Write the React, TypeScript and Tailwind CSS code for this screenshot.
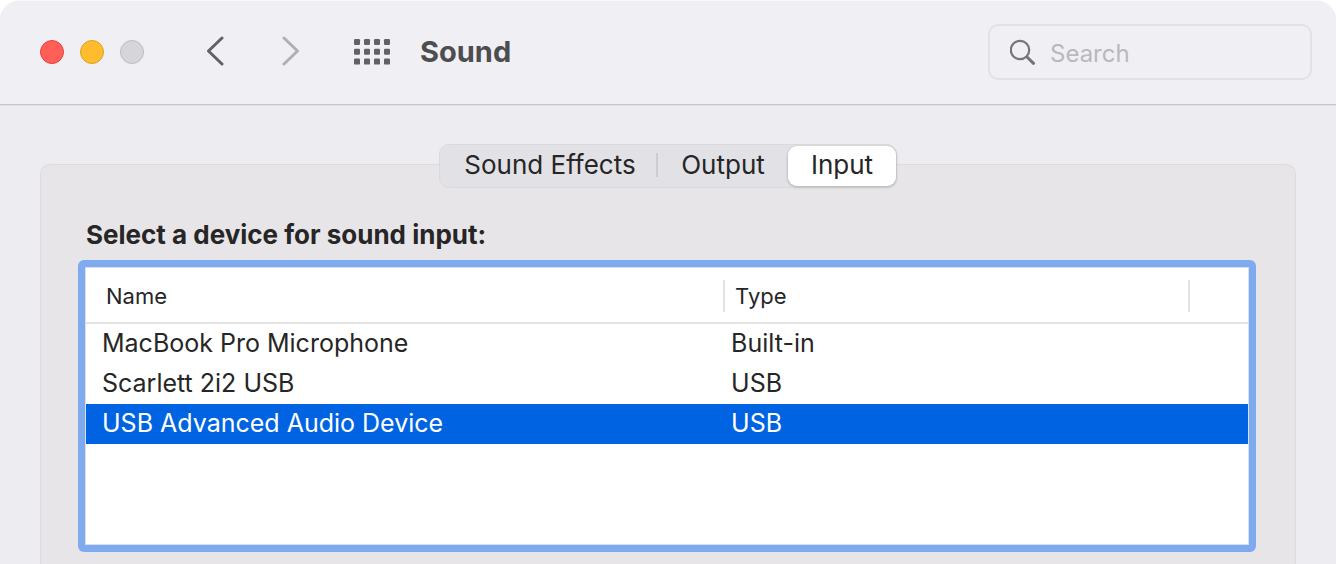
import { useState } from "react";

const TABS = [
  { id: "effects", label: "Sound Effects", width: "w-[218px]" },
  { id: "output",  label: "Output",        width: "w-[130px]" },
  { id: "input",   label: "Input",         width: "w-[108px]" },
] as const;

const DEVICES = [
  { name: "MacBook Pro Microphone", type: "Built-in" },
  { name: "Scarlett 2i2 USB", type: "USB" },
  { name: "USB Advanced Audio Device", type: "USB" },
];

type TabId = (typeof TABS)[number]["id"];

function Chevron({ flipped = false }: { flipped?: boolean }) {
  return (
    <svg width="20" height="32" viewBox="0 0 20 32" fill="none" stroke="currentColor" strokeWidth="3" strokeLinecap="round" strokeLinejoin="round">
      <path d={flipped ? "M3 2 L16.5 15 L3 28" : "M17 2 L3.5 15 L17 28"} />
    </svg>
  );
}

function GridIcon() {
  return (
    <svg width="36" height="26" viewBox="0 0 36 26" fill="currentColor">
      {[0, 10, 20, 30].map((x) =>
        [0, 9.8, 19.6].map((y) => <rect key={`${x}-${y}`} x={x} y={y} width="6" height="6" rx="1.2" />)
      )}
    </svg>
  );
}

function Toolbar() {
  return (
    <header className="flex h-[104px] items-center border-b border-[#c6c5ca] bg-[#f0eff4] pr-6 pb-[2px] pl-10 shadow-[0_1px_0_#e3e2e7]">
      <div className="flex gap-4">
        <button aria-label="Close" className="size-6 rounded-full border border-[#e2463f] bg-[#ff5f57]" />
        <button aria-label="Minimize" className="size-6 rounded-full border border-[#dfa023] bg-[#febc2e]" />
        <button aria-label="Zoom" disabled className="size-6 rounded-full border border-[#bdbcc0] bg-[#d6d5da]" />
      </div>
      <div className="ml-[61px] flex gap-14">
        <button aria-label="Back" className="text-[#626165]">
          <Chevron />
        </button>
        <button aria-label="Forward" disabled className="text-[#b0afb4]">
          <Chevron flipped />
        </button>
      </div>
      <button aria-label="Show All" className="ml-[53px] text-[#626165]">
        <GridIcon />
      </button>
      <h1 className="ml-[30px] text-[29px] leading-9 font-bold text-[#4d4d4f]">Sound</h1>
      <label className="ml-auto flex h-14 w-[324px] items-center gap-[14px] rounded-[10px] border-2 border-[#e2e1e6] pl-5">
        <svg className="shrink-0 text-[#75747a]" width="26" height="26" viewBox="0 0 26 26" fill="none" stroke="currentColor" strokeLinecap="round">
          <circle cx="10" cy="11" r="9.2" strokeWidth="2.2" />
          <path d="M17 18 L23.5 24.3" strokeWidth="3" />
        </svg>
        <input
          type="text"
          aria-label="Search"
          placeholder="Search"
          className="w-full min-w-0 bg-transparent pt-1 text-[24px] leading-8 text-[#262626] outline-none placeholder:text-[#b9b8bd]"
        />
      </label>
    </header>
  );
}

export default function App() {
  const [activeTab, setActiveTab] = useState<TabId>("input");
  const [selected, setSelected] = useState(2);

  return (
    <div className="flex min-h-screen flex-col overflow-hidden rounded-t-[20px] border-t border-[#f8f8fa] bg-[#edecf1] font-['Inter',sans-serif] text-[#262626]">
      <Toolbar />

      <main className="flex flex-1 flex-col px-10 pt-[39px]">
        {/* Tabs sit across the top edge of the panel */}
        <div role="tablist" className="z-10 -mb-6 flex h-11 self-center rounded-[10px] border border-[#dad9dd] bg-[#e2e1e5] py-px">
          {TABS.map((tab) => (
            <button
              key={tab.id}
              role="tab"
              aria-selected={activeTab === tab.id}
              onClick={() => setActiveTab(tab.id)}
              className={`${tab.width} flex items-center pb-[2px] text-[26px] ${
                activeTab === tab.id ? "rounded-[9px] bg-white shadow-[0_1px_2px_1px_#c3c2c6]" : ""
              }`}
            >
              <span className={`flex-1 leading-6 ${tab.id === "effects" ? "border-r-2 border-[#cdccd1] pl-1" : ""}`}>
                {tab.label}
              </span>
            </button>
          ))}
        </div>

        <section className="flex-1 rounded-t-[10px] border border-b-0 border-[#dddbdf] bg-[#e7e5e8] pt-[52px] pr-[39px] pb-3 pl-[37px]">
          <h2 className="px-2 text-[26px] leading-9 font-bold">Select a device for sound input:</h2>

          <div className="mt-[7px] min-h-[292px] rounded-[6px] bg-[#7eaaef] p-[7px]">
            <div className="min-h-[278px] border border-[#dcdfe6] bg-white">
              <table className="w-full table-fixed border-separate border-spacing-0 text-left">
                <thead>
                  <tr className="h-14 text-[22px] leading-8">
                    <th className="w-[55%] border-b-2 border-[#e3e3e3] p-0 pt-[2px] font-normal">
                      <div className="border-r-2 border-[#e3e3e3] pl-5">Name</div>
                    </th>
                    <th className="w-[40%] border-b-2 border-[#e3e3e3] p-0 pt-[2px] font-normal">
                      <div className="border-r-2 border-[#e3e3e3] pl-[10px]">Type</div>
                    </th>
                    <th className="border-b-2 border-[#e3e3e3] p-0" />
                  </tr>
                </thead>
                <tbody>
                  {DEVICES.map((device, i) => (
                    <tr
                      key={device.name}
                      aria-selected={selected === i}
                      onClick={() => setSelected(i)}
                      className={`h-10 text-[25px] leading-8 ${selected === i ? "bg-[#0063e1] text-white" : ""}`}
                    >
                      <td className="p-0 pb-[2px] pl-4">{device.name}</td>
                      <td className="p-0 pb-[2px] pl-[6px]">{device.type}</td>
                      <td className="p-0" />
                    </tr>
                  ))}
                </tbody>
              </table>
            </div>
          </div>
        </section>
      </main>
    </div>
  );
}
